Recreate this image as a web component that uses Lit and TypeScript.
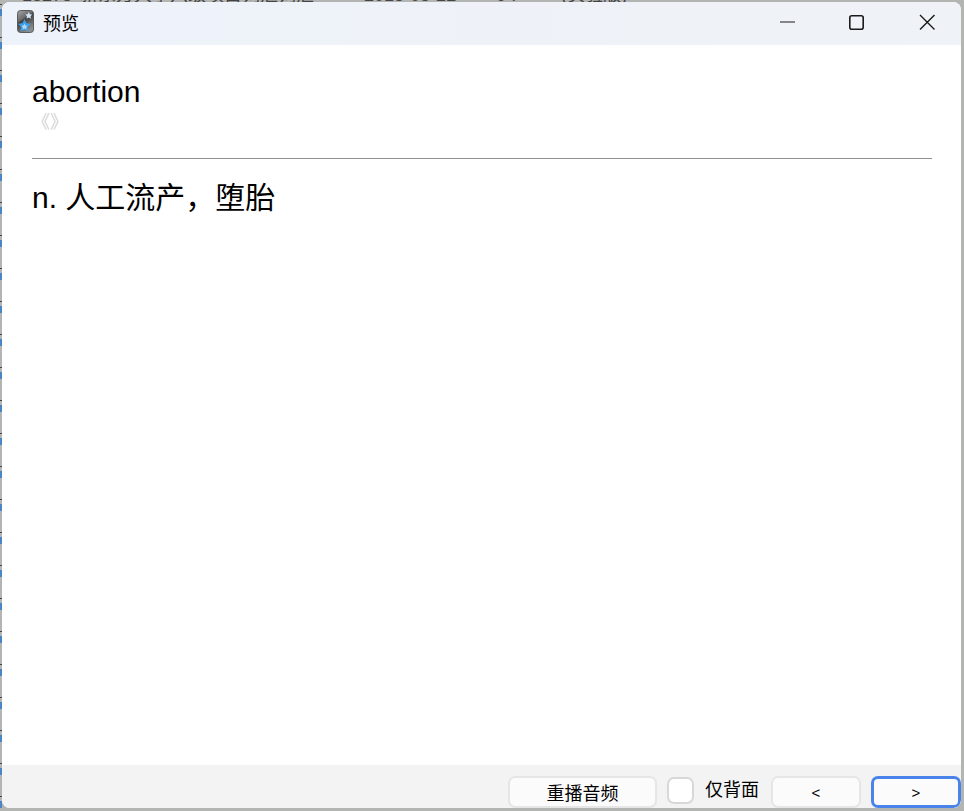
import { LitElement, html, css } from "lit";
import { customElement } from "lit/decorators.js";

const SANS = css`"Liberation Sans", "Noto Sans CJK SC", sans-serif`;

@customElement("app-root")
export class AppRoot extends LitElement {
  static styles = css`
    :host {
      display: block;
      position: relative;
      width: 964px;
      height: 811px;
      overflow: hidden;
      box-sizing: border-box;
      padding: 2px 3px 3px 2px;
      font-family: ${SANS};
      color: #000;
      background-color: #b3b5b3;
    }
    .behind {
      position: absolute;
      top: -14px;
      left: 0;
      display: flex;
      font-size: 18px;
      line-height: 18px;
      color: #444;
      white-space: pre;
    }
    .b1 {
      margin-left: 22px;
    }
    .b2 {
      margin-left: 8px;
    }
    .b3 {
      margin-left: 50px;
    }
    .b4 {
      margin-left: 40px;
    }
    .marks {
      position: absolute;
      left: 0;
      top: 0;
      width: 2px;
      height: 811px;
      background: repeating-linear-gradient(
        to bottom,
        #b3b5b3 0 4px,
        #444 4px 5px,
        #b3b5b3 5px 9px,
        #4a86c5 9px 16px,
        #b3b5b3 16px 33px
      );
    }
    .window {
      position: relative;
      height: 100%;
      display: flex;
      flex-direction: column;
      border-radius: 8px;
      overflow: hidden;
      background: #fff;
    }
    .titlebar {
      flex: 0 0 43px;
      min-height: 0;
      display: flex;
      align-items: center;
      background: linear-gradient(to right, #eef2fa, #eff3f7);
    }
    .app-icon {
      width: 17px;
      height: 23px;
      margin: 0 9px 4px 15px;
      flex: none;
    }
    .title {
      flex: 1;
      font-size: 18px;
      line-height: 24px;
    }
    .controls {
      display: flex;
      margin-right: -1px;
    }
    .controls svg {
      display: block;
      width: 70px;
      height: 43px;
    }
    .content {
      flex: 1;
      min-height: 0;
      padding: 29px 29px 0 30px;
    }
    .word {
      font-size: 30px;
      line-height: 36px;
    }
    .phonetic {
      font-size: 18px;
      line-height: 24px;
      height: 48px;
      color: #cfcfcf;
    }
    hr {
      margin: 0;
      border: 0;
      height: 1px;
      background: #8f8f8f;
    }
    .meaning {
      margin-top: 21px;
      font-size: 30px;
      line-height: 36px;
    }
    .footer {
      flex: 0 0 43px;
      min-height: 0;
      display: flex;
      align-items: flex-start;
      justify-content: flex-end;
      padding: 11px 0 0;
      box-sizing: border-box;
      background: #f3f3f3;
      font-size: 18px;
    }
    button {
      height: 32px;
      box-sizing: border-box;
      padding: 0;
      border: 2px solid #e6e6e6;
      border-radius: 7px;
      background: #fbfbfb;
      font: inherit;
      color: #000;
      flex: none;
    }
    .replay {
      width: 149px;
    }
    .nav {
      width: 90px;
      font-size: 15px;
    }
    .next {
      margin-left: 10px;
      border: 3px solid #4a84ea;
    }
    .check {
      display: flex;
      align-items: center;
      height: 29px;
      margin: 0 12px 0 10px;
      gap: 11px;
      line-height: 29px;
    }
    .box {
      width: 27px;
      height: 27px;
      box-sizing: border-box;
      border: 2px solid #d8d8d8;
      border-radius: 7px;
      background: #fff;
    }
  `;

  render() {
    return html`
      <div class="behind">
        <span class="b1">15278</span><span class="b2">新东方大学六级项目词汇词汇</span><span class="b3">2015-05-22</span><span class="b4">9 .         (实验版)</span>
      </div>
      <div class="marks"></div>
      <div class="window">
        <div class="titlebar">
          <svg class="app-icon" viewBox="0 0 17 23">
            <defs>
              <linearGradient id="g" x1="0" y1="0" x2="0.5" y2="1">
                <stop offset="0" stop-color="#a8a8a8" />
                <stop offset="0.42" stop-color="#6a6a6a" />
                <stop offset="0.5" stop-color="#3e3e3e" />
                <stop offset="1" stop-color="#8c8c8c" />
              </linearGradient>
            </defs>
            <rect x="0.5" y="0.5" width="16" height="22" rx="3" fill="url(#g)" stroke="#5c5c5c" />
            <path d="M11.800 2l1.100 2.200 2.400.4-1.700 1.700.4 2.400-2.200-1.100-2.200 1.100.4-2.400-1.700-1.700 2.400-.4z" fill="#cfe3f5" />
            <path d="M7.500 9l2 4.200 4.600.6-3.300 3.200.8 4.600-4.100-2.200-4.100 2.200.8-4.600-3.300-3.200 4.600-.6z" fill="#3f9fe6" />
            <path d="M7.500 13.500l1 2 2 .4-1.400 1.500.3 2-1.900-.9-1.900.9.3-2-1.400-1.500 2-.4z" fill="#a9d8f7" />
          </svg>
          <div class="title">预览</div>
          <div class="controls">
            <svg viewBox="0 0 70 43" fill="none" stroke="#1a1a1a">
              <path d="M28 20h15" stroke-width="1.200" />
            </svg>
            <svg viewBox="0 0 70 43" fill="none" stroke="#1a1a1a">
              <rect x="27.800" y="13.800" width="13.400" height="13.400" rx="2" stroke-width="1.600" />
            </svg>
            <svg viewBox="0 0 70 43" fill="none" stroke="#1a1a1a">
              <path d="M28 13l14.500 14.500M42.500 13L28 27.500" stroke-width="1.400" />
            </svg>
          </div>
        </div>
        <div class="content">
          <div class="word">abortion</div>
          <div class="phonetic">《》</div>
          <hr />
          <div class="meaning">n. 人工流产，堕胎</div>
        </div>
        <div class="footer">
          <button class="replay">重播音频</button>
          <label class="check"><span class="box"></span><span>仅背面</span></label>
          <button class="nav">&lt;</button>
          <button class="nav next">&gt;</button>
        </div>
      </div>
    `;
  }
}
